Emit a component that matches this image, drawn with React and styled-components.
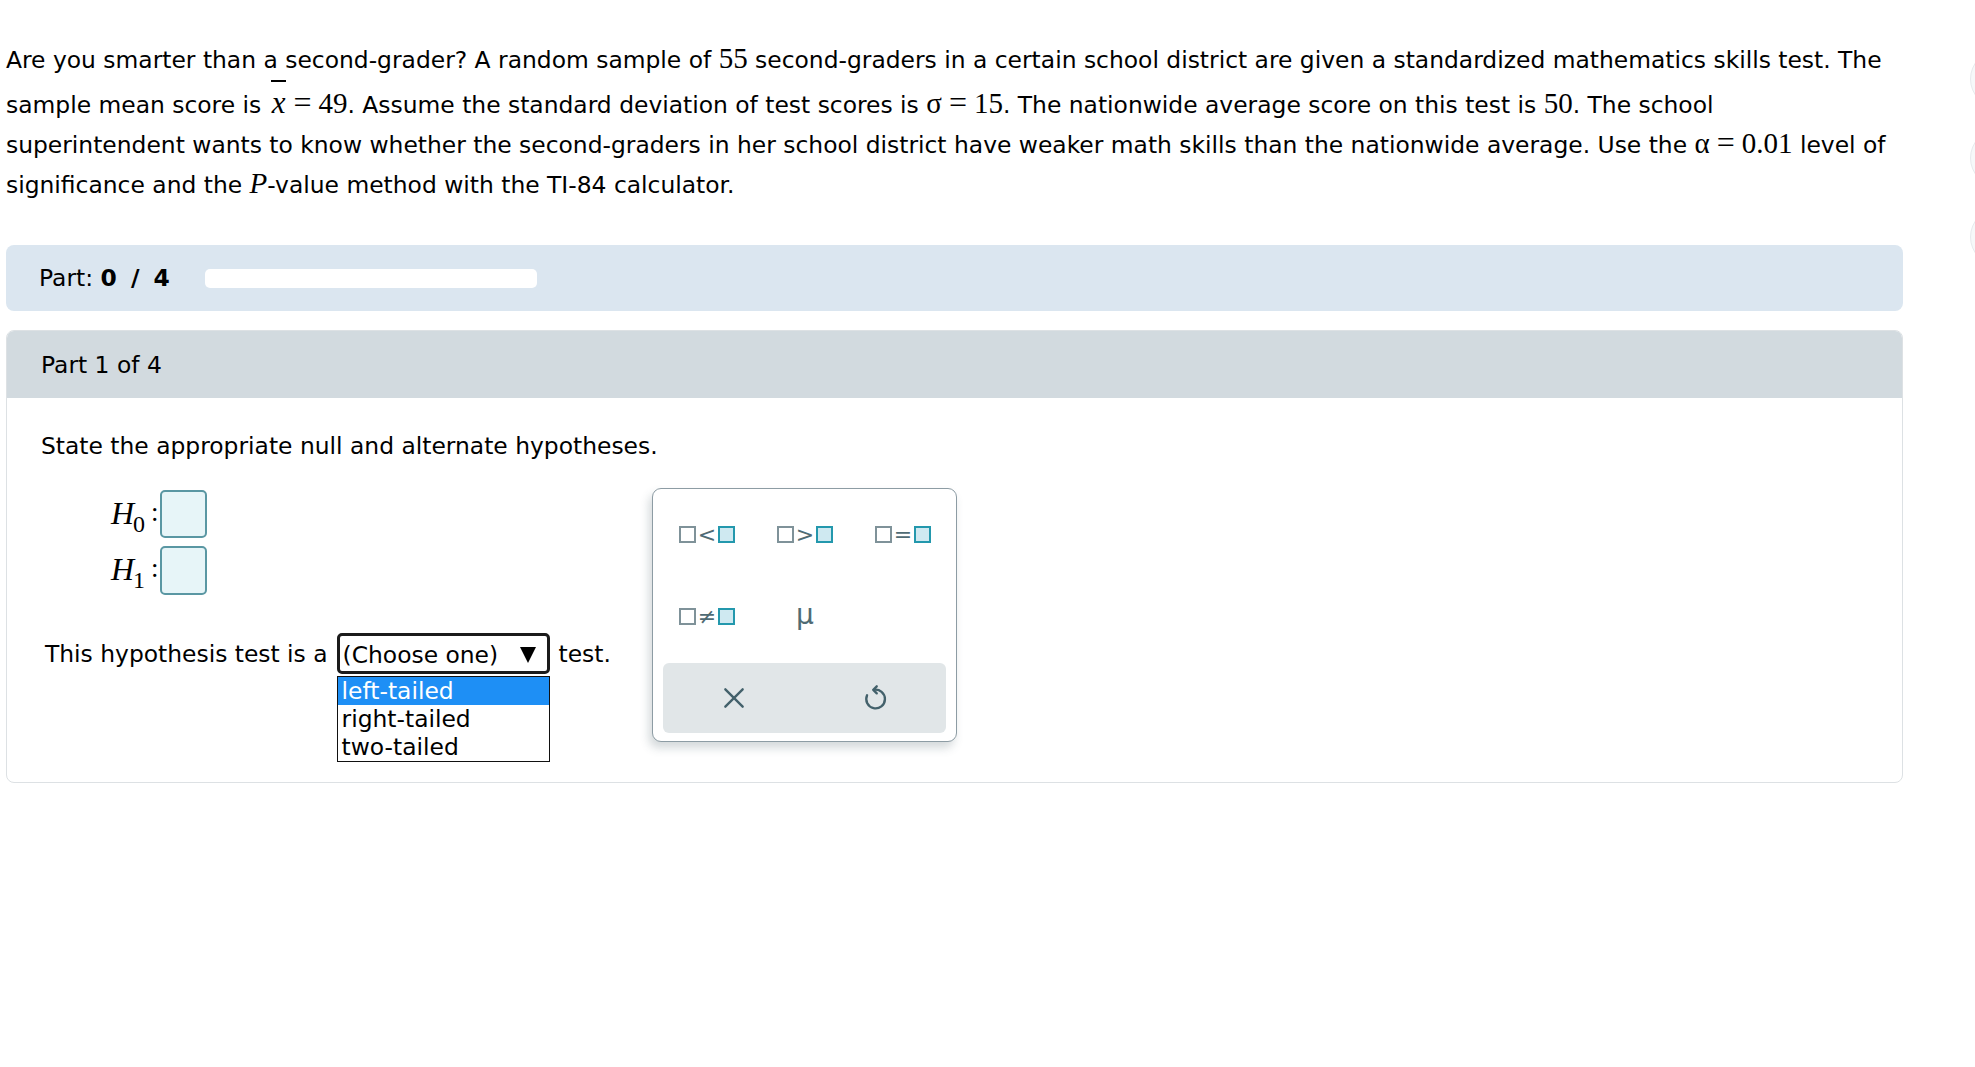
import React from 'react';
import styled, { createGlobalStyle } from 'styled-components';

const Global = createGlobalStyle`
  html, body { margin: 0; padding: 0; background: #ffffff; }
  body { font-family: Verdana, "DejaVu Sans", sans-serif; color: #000; }
  * { box-sizing: border-box; }
`;

const Page = styled.div`
  position: relative;
  width: 1975px;
  min-height: 1067px;
  padding: 40px 0 0 6px;
`;

const Main = styled.div`
  width: 1897px;
`;

const Problem = styled.p`
  margin: 0;
  width: 1920px;
  font-size: 23.4px;
  line-height: 40px;
`;

const M = styled.span`
  font-family: "Liberation Serif", "Times New Roman", serif;
  font-size: 29px;
  line-height: 28px;
  font-style: ${p => (p.$italic ? 'italic' : 'normal')};
`;

const Op = styled.span`
  font-family: "Liberation Serif", "Times New Roman", serif;
  font-size: 32px;
  line-height: 28px;
  margin: 0 7px;
`;

const Bar = styled.span`
  display: inline-block;
  border-top: 2px solid #000;
  line-height: 30px;
  padding: 6px 1px 0 1px;
  margin-left: 2px;
  font-family: "Liberation Serif", "Times New Roman", serif;
  font-size: 31px;
  font-style: italic;
`;

const ProgressPanel = styled.div`
  margin-top: 40px;
  height: 66px;
  background: #dbe6f0;
  border-radius: 8px;
  display: flex;
  align-items: center;
  padding-left: 33px;
  gap: 34px;
  font-size: 23.4px;
`;

const ProgressLabel = styled.div`
  white-space: nowrap;
  b { font-weight: bold; letter-spacing: 1.5px; word-spacing: 3px; }
`;

const ProgressTrack = styled.div`
  width: 332px;
  height: 19px;
  background: #ffffff;
  border-radius: 5px;
`;

const Card = styled.section`
  margin-top: 19px;
  border: 1px solid #dde1e4;
  border-radius: 8px;
`;

const CardHeader = styled.header`
  height: 67px;
  background: #d2dadf;
  border-radius: 7px 7px 0 0;
  display: flex;
  align-items: center;
  padding-left: 34px;
  font-size: 23.4px;
`;

const CardBody = styled.div`
  padding: 33px 34px 40px 34px;
`;

const Prompt = styled.div`
  font-size: 23.4px;
  line-height: 30px;
`;

const WorkArea = styled.div`
  margin-top: 27px;
  display: flex;
  align-items: flex-start;
`;

const LeftCol = styled.div`
  width: 611px;
  padding-top: 2px;
`;

const HypRows = styled.div`
  display: flex;
  flex-direction: column;
  gap: 8px;
  padding-left: 70px;
`;

const HypRow = styled.div`
  display: flex;
  align-items: center;
  height: 48px;
`;

const HLabel = styled.span`
  position: relative;
  font-family: "Liberation Serif", "Times New Roman", serif;
  font-size: 32px;
  font-style: italic;
  width: 40px;
  line-height: 40px;
`;

const Sub = styled.span`
  position: relative;
  top: 8px;
  left: -1px;
  font-style: normal;
  font-size: 24px;
`;

const Colon = styled.span`
  font-family: "Liberation Serif", "Times New Roman", serif;
  font-size: 27px;
  margin: 0 1px 4px 0;
`;

const AnswerBox = styled.div`
  width: 47px;
  height: ${p => p.$h}px;
  border: 2px solid #5a97a3;
  border-radius: 5px;
  background: #e7f5f8;
`;

const TestRow = styled.div`
  margin-top: 39px;
  display: flex;
  align-items: center;
  font-size: 23.4px;
  padding-left: 4px;
`;

const SelectWrap = styled.div`
  position: relative;
  margin: 0 9px 0 9px;
`;

const SelectBox = styled.div`
  width: 213px;
  height: 41px;
  border: 3px solid #1b1b1b;
  border-radius: 5px;
  display: flex;
  align-items: center;
  justify-content: space-between;
  padding: 2px 11px 0 3px;
  background: #fff;
`;

const Arrow = styled.span`
  width: 0;
  height: 0;
  border-left: 8px solid transparent;
  border-right: 8px solid transparent;
  border-top: 16px solid #000;
`;

const OptionList = styled.ul`
  position: absolute;
  left: 0;
  top: 43px;
  width: 213px;
  margin: 0;
  padding: 0;
  list-style: none;
  border: 1px solid #111;
  background: #fff;
  z-index: 3;
`;

const Option = styled.li`
  height: 28px;
  line-height: 28px;
  padding-left: 4px;
  font-size: 23.4px;
  background: ${p => (p.$active ? '#1e8ff5' : '#fff')};
  color: ${p => (p.$active ? '#fff' : '#000')};
`;

const Keypad = styled.div`
  width: 305px;
  height: 254px;
  border: 1px solid #8d9ca4;
  border-radius: 9px;
  background: #fff;
  box-shadow: -3px 6px 10px rgba(60, 80, 90, 0.22);
  padding: 4px 0 8px 0;
  display: flex;
  flex-direction: column;
`;

const KeyGrid = styled.div`
  display: grid;
  grid-template-columns: repeat(3, 98px);
  grid-auto-rows: 82px;
  padding: 0 5px;
`;

const Key = styled.div`
  display: flex;
  align-items: center;
  justify-content: center;
  color: #4a6670;
`;

const Sq = styled.span`
  display: inline-block;
  width: 17px;
  height: 17px;
  border: 2.5px solid ${p => (p.$filled ? '#2398ad' : '#7f9299')};
  background: ${p => (p.$filled ? '#cfe9f1' : '#fff')};
`;

const OpChar = styled.span`
  font-size: 22px;
  line-height: 17px;
  margin: 0 2px;
  color: #4f6b74;
  font-family: "DejaVu Sans", sans-serif;
`;

const Mu = styled.span`
  font-size: 28px;
  color: #4f6b74;
  font-family: "DejaVu Sans", sans-serif;
  margin-bottom: 4px;
`;

const ActionBar = styled.div`
  margin: 6px 10px 0 10px;
  height: 71px;
  background: #e1e6e8;
  border-radius: 6px;
  display: flex;
`;

const ActionBtn = styled.div`
  flex: 1;
  display: flex;
  align-items: center;
  justify-content: center;
  color: #43616b;
`;

const SideDots = styled.div`
  position: absolute;
  left: 1970px;
  top: 50px;
  display: flex;
  flex-direction: column;
  gap: 21px;
`;

const SideDot = styled.div`
  width: 58px;
  height: 58px;
  border-radius: 50%;
  background: #f6f8f9;
  border: 1px solid #e6eaed;
`;

const RelKey = ({ op }) => (
  <Key>
    <Sq />
    <OpChar>{op}</OpChar>
    <Sq $filled />
  </Key>
);

export default function App() {
  return (
    <>
      <Global />
      <Page>
        <Main>
          <Problem>
            Are you smarter than a second-grader? A random sample of <M>55</M> second-graders in a certain
            school district are given a standardized mathematics skills test. The
            <br />
            sample mean score is <Bar>x</Bar>
            <Op>=</Op>
            <M>49</M>. Assume the standard deviation of test scores is <M>σ</M>
            <Op>=</Op>
            <M>15</M>. The nationwide average score on this test is <M>50</M>. The school
            <br />
            superintendent wants to know whether the second-graders in her school district have weaker
            math skills than the nationwide average. Use the <M>α</M>
            <Op>=</Op>
            <M>0.01</M> level of
            <br />
            significance and the <M $italic>P</M>-value method with the TI-84 calculator.
          </Problem>

          <ProgressPanel>
            <ProgressLabel>
              Part: <b>0 / 4</b>
            </ProgressLabel>
            <ProgressTrack />
          </ProgressPanel>

          <Card>
            <CardHeader>Part 1 of 4</CardHeader>
            <CardBody>
              <Prompt>State the appropriate null and alternate hypotheses.</Prompt>
              <WorkArea>
                <LeftCol>
                  <HypRows>
                    <HypRow>
                      <HLabel>
                        H<Sub>0</Sub>
                      </HLabel>
                      <Colon>:</Colon>
                      <AnswerBox $h={48} />
                    </HypRow>
                    <HypRow>
                      <HLabel>
                        H<Sub>1</Sub>
                      </HLabel>
                      <Colon>:</Colon>
                      <AnswerBox $h={49} />
                    </HypRow>
                  </HypRows>
                  <TestRow>
                    This hypothesis test is a
                    <SelectWrap>
                      <SelectBox>
                        <span>(Choose one)</span>
                        <Arrow />
                      </SelectBox>
                      <OptionList>
                        <Option $active>left-tailed</Option>
                        <Option>right-tailed</Option>
                        <Option>two-tailed</Option>
                      </OptionList>
                    </SelectWrap>
                    test.
                  </TestRow>
                </LeftCol>
                <Keypad>
                  <KeyGrid>
                    <RelKey op="<" />
                    <RelKey op=">" />
                    <RelKey op="=" />
                    <RelKey op="≠" />
                    <Key>
                      <Mu>μ</Mu>
                    </Key>
                  </KeyGrid>
                  <ActionBar>
                    <ActionBtn>
                      <svg width="26" height="26" viewBox="0 0 24 24" fill="none" stroke="currentColor" strokeWidth="2.2" strokeLinecap="round">
                        <path d="M4 4 L20 20 M20 4 L4 20" />
                      </svg>
                    </ActionBtn>
                    <ActionBtn>
                      <svg width="28" height="28" viewBox="0 0 24 24" fill="none" stroke="currentColor" strokeWidth="2" strokeLinecap="round" strokeLinejoin="round">
                        <path d="M11 5 A8 8 0 1 1 5.2 9.6" />
                        <path d="M13.5 2 L10.5 5 L13.5 8" />
                      </svg>
                    </ActionBtn>
                  </ActionBar>
                </Keypad>
              </WorkArea>
            </CardBody>
          </Card>
        </Main>
        <SideDots>
          <SideDot />
          <SideDot />
          <SideDot />
        </SideDots>
      </Page>
    </>
  );
}
